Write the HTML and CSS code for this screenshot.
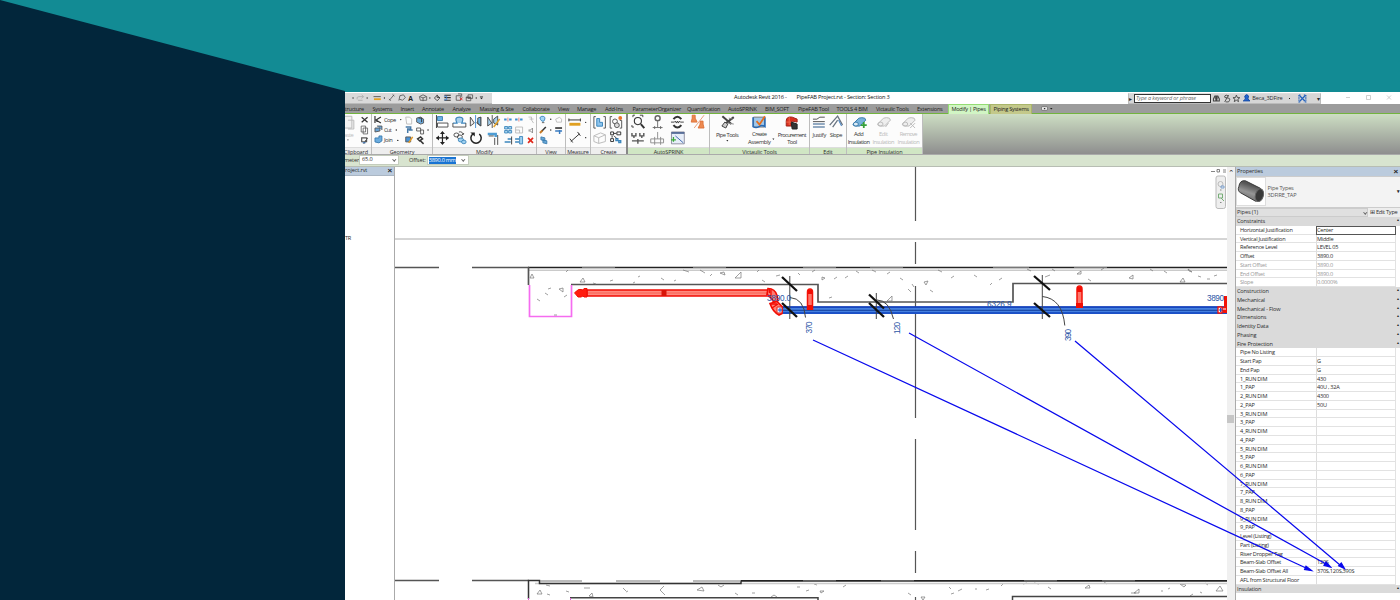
FILE: index.html
```html
<!DOCTYPE html>
<html lang="en">
<head>
<meta charset="utf-8">
<title>PipeFAB Project.rvt - Section: Section 3</title>
<link rel="stylesheet" href="styles.css">
</head>
<body>
<main class="banner">
<svg class="wedge" viewBox="0 0 345 600"><path d="M0 0L345 91V600H0Z" fill="#02263b"/></svg>
<section class="app">
  <header class="titlebar">
    <svg class="quick" viewBox="345 93 147 11" fill="none" stroke="#555" stroke-width=".9">
      <g stroke="#aaa"><path d="M351 100q-1-3 2-3h5M356 95l2 2-2 2M352 101h5"/></g>
      <path d="M369 97h8" stroke="#444"/><path d="M369.500 99.800h7.500" stroke="#e3a224" stroke-width="2"/>
      <path d="M386.500 101l5-6M386 99.500l2 2M390 94.500l2 2"/><path d="M397 101l1-5 4-1 2 3-3 3-3-1z"/>
      <path d="M419.500 97l4-2 4 2v4h-7zM420 97l3.500 1.500 3.500-1.500M423.500 98v4"/><path d="M436 98.500l3-3 3 3-3 3zM439 95v3h3" stroke="#333"/>
      <path d="M447 95.500h7M447 98h7M447 101h7" stroke-width="1.300" stroke="#333"/><path d="M446.500 96.500h3v4h-3" stroke="#3c7ed0"/>
      <path d="M460 96h5v5h-5zM462 94h4v3"/><path d="M464 98l3 3M467 98l-3 3" stroke="#d22"/>
      <path d="M473 95h5v4h-5zM471 97.500h5v4h-5z"/><path d="M471 98h5" stroke-width="1.500"/>
      <g fill="#222" stroke="none"><circle cx="346.500" cy="98.500" r=".7"/><circle cx="362" cy="98.500" r=".7"/><circle cx="381" cy="98.500" r=".7"/><circle cx="431" cy="98.500" r=".7"/><circle cx="482" cy="98.500" r=".7"/><path d="M486 98h3.500l-1.700 2zM486 96.500h3.500v.7h-3.500z"/></g>
      <text x="407.300" y="101.300" class="glyph-a">A</text>
    </svg>
    <div class="doc-title"><span>Autodesk Revit 2016 -</span><span>PipeFAB Project.rvt - Section: Section 3</span></div>
    <div class="info">
      <span class="play">▸</span><span class="search">Type a keyword or phrase</span>
      <svg viewBox="1213 93 40 11" fill="none" stroke="#444" stroke-width=".9"><path d="M1215.500 101v-2l1.500-3h1v5zM1221.500 101v-2l-1.500-3h-1v5zM1217 98h3" stroke-width="1.100"/><path d="M1231 96q-3-2-4 0t3 2 1 4h-3M1227 102l4-7"/><path d="M1239 95l1 2.500 2.500.2-2 1.500.7 2.500-2.200-1.400-2.200 1.400.7-2.500-2-1.500 2.500-.2z"/><path d="M1247.500 96q2-3 4 0l-.7 3 2.200 2h-7l2.200-2z" fill="#2265cf" stroke="#174aa2"/></svg>
      <span class="user">Beca_3DFire</span><i class="dot"></i>
      <svg class="exchange" viewBox="0 0 9 9" fill="none" stroke="#2362bd" stroke-width="1.300"><path d="M2 2l5 5M7 2l-5 5"/><path d="M1 1h2M1 1v7h2M8 1v7H6M6 1h2" stroke-dasharray="1.500 .7"/></svg>
      <span class="help">▾</span>
    </div>
    <svg class="winbtns" viewBox="0 0 60 11" fill="none" stroke="#bbb" stroke-width=".7"><path d="M6 4.500h4M26.500 2.500h4v4h-4zM47 2.500l4 4M51 2.500l-4 4"/></svg>
  </header>
  <nav class="tabs"><span>Structure</span><span>Systems</span><span>Insert</span><span>Annotate</span><span>Analyze</span><span>Massing &amp; Site</span><span>Collaborate</span><span>View</span><span>Manage</span><span>Add-Ins</span><span>ParameterOrganizer</span><span>Quantification</span><span>AutoSPRINK</span><span>BIM_SOFT</span><span>PipeFAB Tool</span><span>TOOLS 4 BIM</span><span>Victaulic Tools</span><span>Extensions</span><span class="active">Modify | Pipes</span><span class="context">Piping Systems</span><svg viewBox="0 0 12 6"><rect x=".5" y=".7" width="6" height="3.600" rx="1" fill="#eee" stroke="#555" stroke-width=".6"/><path d="M2.600 2h2l-1 1.500zM9 2h2.500l-1.200 1.600z" fill="#222"/></svg></nav>
  <div class="ribbon">
    <div class="panel clip"><svg viewBox="345 114 26.500 33" fill="none" stroke="#555"><g stroke="#bbb"><path d="M345 116h7v12h-7M348 120h6v9h-6" fill="#f2f2f2"/></g><path d="M362 117l6 5M368 117l-6 5" stroke-width="1.300" stroke="#333"/><path d="M361.500 126h4.500v6h-4.500zM363.500 128h4.500v6h-4.500z" fill="#fff" stroke-width=".8"/><path d="M362 138h5v4h-5zM364 144l4-6" stroke-width="1.200"/><path d="M363 143h3" stroke="#3979c2"/><text class="dim" x="344" y="137" textLength="10">aste</text><circle cx="348" cy="140" r=".6" fill="#333" stroke="none"/></svg><footer>Clipboard</footer></div>
    <div class="panel geo"><svg viewBox="372 114 60.500 33" fill="none" stroke="#555" stroke-width=".9">
      <path d="M375 116v7M381 117l-5 3 5 3M377 119v3" stroke="#333" stroke-width="1.200"/><path d="M375 132v-4h5v3zM377 126h5v4" fill="#6aa4d6"/><path d="M375 142v-4h4v-2h3v5l-3 2z" fill="#6aacdf" stroke="#397bae"/>
      <path d="M406 117h4l2 2v5h-5z" stroke="#bbb"/><path d="M417 118l4-1 3 2v4l-3 1-4-2z" fill="#6ca9db"/><path d="M419 118h3v4" stroke="#333"/>
      <path d="M406 127h5v2h-3v4M409 130h4" stroke="#4779a7" stroke-width="1.500"/><path d="M417 128h4v3h-4zM421 130h3v4h-3z"/>
      <path d="M406 137h5v5h-5z" fill="#4892d6"/><path d="M409 143l4-6" stroke="#e39a28" stroke-width="1.500"/><path d="M418 139l3-2 2 2-3 2zM420 140l4 4" stroke="#333" stroke-width="1.500"/>
      <g fill="#222" stroke="none"><circle cx="401" cy="119.500" r=".7"/><circle cx="396.500" cy="130" r=".7"/><circle cx="398" cy="140.500" r=".7"/><circle cx="428.500" cy="130" r=".7"/></g>
      <text x="384" y="121.700" textLength="12.500">Cope</text><text x="384" y="132.200" textLength="8">Cut</text><text x="384" y="142.500" textLength="9">Join</text></svg><footer>Geometry</footer></div>
    <div class="panel modify"><svg viewBox="433 114 103.500 33" fill="none" stroke="#444" stroke-width=".9">
      <path d="M436.500 115v13" stroke="#333"/><path d="M437.500 116.500h5v4h-5z" fill="#6db4e6" stroke="#397bae"/><path d="M437.500 123h10.500v4h-10.500z" fill="#fff"/>
      <path d="M453 123h4q-3-6 2.500-6t2.500 6h4" fill="#a9d0ec" stroke="#3f87bd" stroke-width="1.300"/><path d="M453 123v4h13v-4"/>
      <path d="M470.500 117v9l4-3zM481 117v9l-4-3z" fill="#eee"/><path d="M475.800 115v13" stroke="#3b8ad1"/><path d="M478 118l3-1v9l-3-3z" fill="#71b4e3"/>
      <path d="M488 117v9l4-3zM494 119l4-3v9l-4-2z" fill="#a4d0ef"/><path d="M494 127l6-8" stroke="#e3a32c" stroke-width="1.500"/><path d="M492.500 115v13"/>
      <g stroke="#3d8ed0" stroke-width="2"><path d="M504.500 119.500h2.500M509.500 119.500h2.500M515.500 119.500h2.500M520.500 119.500h2.500"/></g><path d="M508.300 117.500v4M519.300 117.500v4" stroke="#d55" stroke-width=".7"/>
      <path d="M529 117h3v3l2 3M530 119h4" stroke="#bbb"/>
      <g stroke="#3d86bc" fill="#a6d4f0"><path d="M505 126.500h3v2.500h-3zM509 126.500h3v2.500h-3zM505 130.500h3v2.500h-3zM509 130.500h3v2.500h-3z"/></g><path d="M516 127h7v6h-7zM516 130h4v3" stroke="#bbb"/><path d="M529 130h2l2-2v5l-2-2h-2" stroke="#888"/>
      <path d="M505 142h6M508 139h4" stroke="#3c86bd" stroke-width="1.500"/><path d="M512 136.500v8" stroke="#333"/><path d="M515.500 139h4M515.500 142h4" stroke="#3c86bd" stroke-width="1.500"/><path d="M520 136.500v7.500h3v-7.500z" stroke="#3c86bd" fill="#9fd0ef"/>
      <path d="M528.500 138l5 5M533.500 138l-5 5" stroke="#e0291c" stroke-width="1.700"/>
      <path d="M436.500 138h12M442.500 132v12" stroke="#222" stroke-width="1.200"/><path d="M440 134l2.500-3 2.500 3zM440 142l2.500 3 2.500-3zM439 135.500l-3 2.500 3 2.500zM446 135.500l3 2.500-3 2.500z" fill="#222" stroke="none"/>
      <ellipse cx="456.500" cy="135" rx="2.500" ry="2"/><ellipse cx="460" cy="137" rx="2.500" ry="2"/><path d="M459 132q4-1 4 3l-1-1M463 135l1-2"/><ellipse cx="461" cy="140" rx="2.700" ry="2" fill="#9fd0ef" stroke="#3c86bd"/><ellipse cx="464" cy="142" rx="2.300" ry="1.800" fill="#9fd0ef" stroke="#3c86bd"/>
      <path d="M473 134a5.200 5.200 0 1 0 6.500 0" stroke="#222" stroke-width="1.500"/><path d="M470.500 132.500h4.500v4z" fill="#222" stroke="none"/>
      <path d="M488 134h8v3" stroke="#4e9dd4" stroke-width="2.500"/><path d="M495 138v7M498 135v10M489 136h5"/>
      </svg><footer>Modify</footer></div>
    <div class="panel view"><svg viewBox="537 114 28.500 33" fill="none" stroke="#555" stroke-width=".9"><path d="M542 121q-4-4 0-5 5 0 2 5z" fill="#a4d6f5" stroke="#3c86bd"/><path d="M542 122.500h2.500"/><path d="M556 119l4-2 2 2v3h-5z" stroke="#bbb"/><path d="M546 127l-4 4" stroke="#333" stroke-width="1.500"/><path d="M542.500 130.500l-2.500 2.500" stroke="#c77a25" stroke-width="2"/><path d="M555.500 128h7" stroke-width="2"/><path d="M555.500 131h7M560 130v4" stroke="#397bc0" stroke-width="1.500"/><path d="M541 137l4 1v3l-4-1zM543 140l4 1v3l-4-1z" fill="#68a7d7" stroke="#397bae"/><g fill="#222" stroke="none"><circle cx="551" cy="119" r=".7"/><circle cx="551" cy="130" r=".7"/></g></svg><footer>View</footer></div>
    <div class="panel measure"><svg viewBox="566 114 25 33" fill="none" stroke="#333"><path d="M569 119.500h12M569 118v3M581 118v3"/><path d="M569.500 124h11.500" stroke="#e0a021" stroke-width="3"/><path d="M571 142l9-8M570 139l3 4M578 132l3 4"/><g fill="#222" stroke="none"><circle cx="586.500" cy="122" r=".7"/><circle cx="586.500" cy="138" r=".7"/></g></svg><footer>Measure</footer></div>
    <div class="panel create"><svg viewBox="591 114 36.500 33" fill="none" stroke="#555"><path d="M596 116h-2v12h2M604 116h2v12h-2M613 116h-2v12h2M621 120h2v8h-2"/><path d="M597 118h3v4h3v4h-6z" fill="#8dc4ed" stroke="#3c86bd"/><circle cx="616" cy="121" r="2.500"/><circle cx="618" cy="125" r="2.500" fill="#ddd"/><circle cx="621.500" cy="117.500" r="2" fill="#e9742a" stroke="none"/><path d="M594 136l7-3 5 2v7l-7 2-5-2zM594 136l5 2 7-3M599 138v6" stroke="#bbb"/><path d="M611.500 132h3v3h-3zM618 132h4v3h-4zM611.500 139h3v3h-3z" stroke="#333"/><path d="M617 139h2v2h-2zM620 141h2v2h-2z" stroke="#3c86bd" stroke-width="1.400"/><path d="M615 133.500h2.500M613 136v2M615 136l3 3" stroke="#333"/></svg><footer>Create</footer></div>
    <div class="panel green auto"><svg viewBox="628 114 82 33" fill="none" stroke="#333" stroke-width=".9">
      <path d="M633 117v-2h2M640 115h3v2M632 125v2h2" /><circle cx="638" cy="121" r="3.600" stroke-width="1.100"/><path d="M641 124l3.500 4" stroke-width="2"/>
      <circle cx="658" cy="118" r="2.500" stroke="#666" stroke-width="1.500"/><path d="M658 120v7M653 127.500h10M655 126v3M661 126v3" stroke="#666"/>
      <path d="M674 119q4-5 8 0M674 125q4 5 8 0" stroke="#333" stroke-width="2"/><path d="M671.500 122h3.500l1-1 1 2 1-2 1 2 1-2 1 1h3.500"/>
      <path d="M693 115h3v3l2 4h-6l1-4zM701 121h3v3l1 4h-6l2-4z" fill="#ed8a50" stroke="#dd7037"/><path d="M705 115l-10 13" stroke="#e59671"/>
      <path d="M632 133v3h4v-3M640 133v3h4v-3M634 136v2M642 136v2M632 141h12M638 139v5" stroke-width="1.400" stroke="#555"/>
      <path d="M651 139h13v4h-13zM655 137v8M658 132v7M661 137v8" stroke="#888"/>
      <path d="M672 132h13v12h-13z" fill="#e7eef9" stroke="#889"/><path d="M672 133h13" stroke="#4f6794" stroke-width="1.800"/><path d="M676 136l8 7" stroke="#345fa8"/><path d="M674 137v5M671.500 140h5" stroke="#3ba938" stroke-width="1.300"/></svg><footer>AutoSPRINK</footer></div>
    <div class="panel green vict"><svg viewBox="710 114 100 33" fill="none" stroke="#444">
      <path d="M722.500 116l9 8M734 117l-9 7" stroke-width="2"/><path d="M722 126l3-4 3 2-2 4z" fill="#ccc"/><path d="M728 123l6 1M729 118l4 1" stroke="#888"/>
      <path d="M754 117h11v10h-11z" fill="#9fc8ec" stroke="#777"/><path d="M753.500 117v9.500q3 2 6 0 3-2 6 0V117" stroke="#296bb5" stroke-width="1.600"/><path d="M757 121l3 3.500 5.500-8.500" stroke="#e56f20" stroke-width="1.800"/>
      <path d="M787 126v-5q0-5 6-4l5 2v3l-5-1v5z" fill="#d9301f" stroke="#a22318"/><path d="M792 122l6 2v5h-5z" fill="#333" stroke="#222"/><path d="M790 117v8M787 122h5" stroke="#ef684c"/>
      <g text-anchor="middle"><text x="727.500" y="137" textLength="23">Pipe Tools</text><text x="760" y="136.500" textLength="15">Create</text><text x="760" y="143.800" textLength="23">Assembly</text><text x="793" y="137" textLength="29">Procurement</text><text x="793" y="143.800" textLength="10">Tool</text></g><path d="M726.500 140h2l-1 1.500zM773 138.500h2l-1 1.500z" fill="#222" stroke="none"/></svg><footer>Victaulic Tools</footer></div>
    <div class="panel green edit"><svg viewBox="810 114 36.500 33" fill="none" stroke="#555"><path d="M813 119h4l3-2h5M813 121.500h12"/><path d="M813 124h12M813 127h12" stroke="#708eae" stroke-width="1.500"/><path d="M830 125l8-9 5 9M833 127l5-7" stroke="#697481" stroke-width="1.300"/><path d="M839 120l3 6" stroke="#397bc0"/><g text-anchor="middle"><text x="819.500" y="137" textLength="14">Justify</text><text x="836.500" y="137" textLength="13">Slope</text></g></svg><footer>Edit</footer></div>
    <div class="panel green insul"><svg viewBox="847 114 76 33" fill="none" stroke="#397bac"><path d="M853 124l6-6q3-1 6 0l1 2-6 6h-4q-3 0-3-2z" fill="#78b2dc"/><ellipse cx="856" cy="124" rx="2.500" ry="2" fill="#ddecf7"/><path d="M864 122v6M861 125h6" stroke="#36a13a" stroke-width="1.800"/><g stroke="#bbb"><path d="M878 124l6-6q3-1 6 0l1 2-6 6h-4q-3 0-3-2zM903 124l6-6q3-1 6 0l1 2-6 6h-4q-3 0-3-2z" fill="#eee"/><ellipse cx="881" cy="124" rx="2.500" ry="2"/><ellipse cx="906" cy="124" rx="2.500" ry="2"/><path d="M886 127l3-4M911 123l5 5M916 123l-5 5"/></g><g text-anchor="middle"><text x="859" y="136.500" textLength="10">Add</text><text x="859" y="143.800" textLength="22.500">Insulation</text><g class="dim"><text x="884" y="136.500" textLength="9">Edit</text><text x="884" y="143.800" textLength="22.500">Insulation</text><text x="909.500" y="136.500" textLength="18">Remove</text><text x="909.500" y="143.800" textLength="22.500">Insulation</text></g></g></svg><footer>Pipe Insulation</footer></div>
  </div>
  <div class="options"><label class="diameter">meter:</label><span class="combo d">65.0<b></b></span><i class="sep"></i><label>Offset:</label><span class="combo o"><mark>3890.0 mm</mark><b></b></span></div>
  <div class="workspace">
    <aside class="browser"><h2><span>roject.rvt</span><b>×</b></h2><div class="tree"><span></span><span></span><span>TR</span><span></span></div></aside>
    <svg class="drawing" viewBox="395 167 832 433" fill="none" stroke="#444">
      <path d="M395 239h832" stroke="#aaa"/>
      <path d="M395 267.500h44M472 267.500h57M395 580.500h44M472 580.500h57" stroke="#555" stroke-width="1.300"/>
      <path d="M915.500 167v54M915.500 242v22M915.500 286v132M915.500 439v91M915.500 551v22M915.500 597v3" stroke="#555" stroke-width="1.200"/>
      <path d="M529 270.200h698" stroke="#aaa" stroke-width=".9"/><path d="M528 267.500h699" stroke="#222" stroke-width="1.600"/><path d="M582 267.500h33M693 267.500h33M803 267.500h33M870 267.500h33M993 267.500h36M1074 267.500h33" stroke="#777"/>
      <path d="M528.500 267v18M571 284.500h247v17.500h195v-18.500h214" stroke="#555" stroke-width="1.700"/>
      <path d="M529.500 285v31.500h42V285" stroke="#f56cf0" stroke-width="1.700"/>
      <g stroke="#777" stroke-width=".7">
        <path d="M530 278l2-4 2 4zM580 282l3-4 2 4zM559 289l4-1v4zM720 273l4-1 1 3zM735 278l6-6v6zM822 277l3 1-3 2zM887 301l5-5v5zM924 282l4-1-2 4zM1077 274l4-3v3zM1129 278l4-3v4zM1180 282l3-4 2 4zM1188 269l4 3-3-1z"/>
        <path d="M548 289l3-1M545 293l3 2M537 299l3 2M564 297l3-2M554 315h3M566 272l2-2M593 283l3 1M610 281l3-1M638 277l2-1M633 283l2-1M661 278l3 2M674 281l2-1M683 270l6 2M700 270l5 3M710 276l2-2M762 280l3 2M757 272l2-2M776 276l4-1M798 273l2 2M812 272l3-2M834 279l3-2M845 278l3-2M856 271l3 2M872 270l4 2M887 274l3-2M900 278l3 2M908 289l3 3M912 284l2 3M930 290l3 2M938 270l4 2M951 278l3-2M974 275l3 2M990 285l2-2M999 280l3-2M829 298l3-1M1027 269l4 2M1045 277l5-2M1052 269l3 2M1088 279l3 2M1101 270l3-2M1150 269l3 2M1164 271l3 2M1198 276l3 1M1207 279h3M1214 276l3-1"/>
        <path d="M546 585l4 1M547 594l3 1M537 594l3-4 2 4zM566 591l3 1M584 588l6 0M589 596l3-3 1 4zM623 588l3 3M626 592l2-1M664 586l-4 4 5 5M697 590l5-3 2 4zM718 585l3 2 3-2M735 593l3 2M752 593h3M771 597l3-2 3 2M797 587h3M806 591l3-1M820 591h4l-3 2zM814 584l3 1M843 587l3-2M908 593l3 2M921 597h4l-2 3zM949 587l2 2M951 594l3-1M958 591l4-2M975 589h2M986 590l3-1M1001 586l2-2M1023 584l4-1M1034 583l5 1M1048 587l3 2M1085 588l4-3 1 3zM1104 582l3 2M1131 593l5 0M1134 593l5-4v4zM1161 591h2M1168 589l2-1M1180 584l6 1-2 2zM1190 596l3-2M1200 592l2 1M1205 583l3 2M1216 591l4-5 3 5z"/>
      </g>
      <path d="M535 583.500h692" stroke="#ccc" stroke-width="1.700"/><path d="M528.500 599v-18.500h11v3H741v-3" stroke="#333" stroke-width="1.500"/><path d="M540 581h42M616 581h44M693 581h48" stroke="#777"/><path d="M741 580.800h486" stroke="#222" stroke-width="1.700"/><path d="M803 580.800h33M881 580.800h33M1024 580.800h33M1102 580.800h33" stroke="#777" stroke-width="1.300"/>
      <path d="M570 597.700h248v2.300M1012.500 600v-3.500H1227" stroke="#444" stroke-width="1.500"/><path d="M528.500 598v2M570.500 598v2" stroke="#e363dd"/>
      <path d="M587 290h183v6H587z" fill="#ff8a7e" stroke="#f20d04" stroke-width="1.500"/><path d="M588 293h181" stroke="#f8564a" stroke-width=".8"/><path d="M574.500 292.800l4-3.300h2.500l2 .5 1-1.500h3v8.500h-3l-1-1-2 1h-3z" fill="#ff1d10" stroke="#f20d04"/><path d="M661.500 290h5v6h-5z" fill="#d91408" stroke="none"/>
      <path d="M780 306.500h447v7.500H780z" fill="#4580de" stroke="none"/><path d="M780 307h447" stroke="#0833b5" stroke-width="1.500"/><path d="M780 310.300h447" stroke="#123f9e"/><path d="M780 313h447" stroke="#1c51c7" stroke-width="2"/>
      <path d="M768 288.500q7 0 9 7l1 5-4 2-4-6-3-2z" fill="#ff7b70" stroke="#f20d04" stroke-width="1.700"/><path d="M770 303.500l7-2 5 5v7l-3 1.500q-6-3-9-11.500z" fill="#ff8176" stroke="#f20d04" stroke-width="1.700"/><path d="M771 290v6M770 304h7M772 308l6-4M769.500 288v5" stroke="#f20d04" stroke-width="1.300"/><path d="M777 307h5v6h-5z" fill="#e8f0ff" stroke="#e92218"/><path d="M778 310h4M780 308v4" stroke="#1753cf"/>
      <path d="M807.500 309v-17q0-3 2.500-3t2.500 3v17z" fill="#ff766b" stroke="#f41308" stroke-width="1.500"/><path d="M808 290h4v4h-4zM807 305h6v5h-6z" fill="#f20d04" stroke="none"/>
      <path d="M1077 307v-18q0-3 2.500-3t2.500 3v18z" fill="#ff766b" stroke="#f41308" stroke-width="1.500"/><path d="M1077 287h5v5h-5zM1076 303h7v5h-7z" fill="#f20d04" stroke="none"/>
      <path d="M1218 307h4v6h-4z" fill="#fff" stroke="#f41308" stroke-width="1.300"/><path d="M1219 310h3M1220.500 308v4" stroke="#1753cf"/><path d="M1224 296h3v17h-4v-6h1z" fill="#f41308" stroke="none"/><path d="M1223 309h3" stroke="#fff"/>
      <g stroke="#444"><path d="M789.800 276v43M876.300 293v26M1042.300 275v44"/><path d="M790 297.500q14 1 15.500 20M877 300q12 0 16.500 19M1042.300 296.500q20 2 22.500 29"/></g>
      <path d="M782 277l15 14M782 303l15 14M869 294.500l15 14M869 303l15 14M1034 276l16 14M1034 303l16 14" stroke="#111" stroke-width="2.300"/>
      <g class="dims"><text x="767" y="301" textLength="24">3890.0</text><text x="987" y="306.500" textLength="24.500">6326.9</text><text x="1207" y="301" textLength="17">3890</text><text transform="translate(812 333.500) rotate(-90)" textLength="12">370</text><text transform="translate(899.500 334) rotate(-90)" textLength="12">120</text><text transform="translate(1071 341) rotate(-90)" textLength="12">390</text></g>
      <path d="M1211 171.500h4M1217 169.500h2.500v2.500h-2.500zM1223 170h3M1223 172h3" stroke="#666" stroke-width=".8"/>
      <rect x="1216" y="176" width="9.500" height="32.500" rx="2" fill="#eee" stroke="#bbb"/><circle cx="1220.500" cy="184" r="2.500" stroke="#bbb"/><path d="M1221 186h3v2h-3z" stroke="#7da1cf"/><path d="M1218.500 194h4v4h-4zM1221 198l3 3" stroke="#77ad77"/><path d="M1220 190h1.500M1220 202.500h1.500" stroke="#888"/>
    </svg>
    <div class="scrollbar"><span>⌃</span><i></i></div>
    <aside class="properties">
      <h2><span>Properties</span><b>×</b></h2>
      <div class="type"><svg viewBox="0 0 30 29"><defs><linearGradient id="pipe" x1="0" y1="0" x2="-.4" y2="1"><stop stop-color="#555"/><stop offset=".35" stop-color="#969696"/><stop offset="1" stop-color="#454545"/></linearGradient></defs><path d="M2 9Q3 2 9 3l16 8q6 6 0 13l-5 1L4 16Q0 14 2 9z" fill="url(#pipe)" stroke="#333"/><ellipse cx="24" cy="18.500" rx="4.300" ry="7" transform="rotate(15 24 18.500)" fill="#393939" stroke="#666"/></svg><p>Pipe Types<br>3DFIRE_TAP</p><b>▾</b></div>
      <div class="filter"><span>Pipes (1)<i class="chev"></i></span><em>⊞ Edit Type</em></div>
      <div class="group">Constraints</div>
      <dl><dt>Horizontal Justification</dt><dd class="boxed">Center</dd><dt>Vertical Justification</dt><dd>Middle</dd><dt>Reference Level</dt><dd>LEVEL 05</dd><dt>Offset</dt><dd>3890.0</dd><dt class="off">Start Offset</dt><dd class="off">3890.0</dd><dt class="off">End Offset</dt><dd class="off">3890.0</dd><dt class="off">Slope</dt><dd class="off">0.0000%</dd></dl>
      <div class="group">Construction</div><div class="group">Mechanical</div><div class="group">Mechanical - Flow</div><div class="group">Dimensions</div><div class="group">Identity Data</div><div class="group">Phasing</div><div class="group">Fire Protection</div>
      <dl><dt>Pipe No Listing</dt><dd></dd><dt>Start Pap</dt><dd>G</dd><dt>End Pap</dt><dd>G</dd><dt>1_RUN DIM</dt><dd>430</dd><dt>1_PAP</dt><dd>40U , 32A</dd><dt>2_RUN DIM</dt><dd>4300</dd><dt>2_PAP</dt><dd>50U</dd><dt>3_RUN DIM</dt><dd></dd><dt>3_PAP</dt><dd></dd><dt>4_RUN DIM</dt><dd></dd><dt>4_PAP</dt><dd></dd><dt>5_RUN DIM</dt><dd></dd><dt>5_PAP</dt><dd></dd><dt>6_RUN DIM</dt><dd></dd><dt>6_PAP</dt><dd></dd><dt>7_RUN DIM</dt><dd></dd><dt>7_PAP</dt><dd></dd><dt>8_RUN DIM</dt><dd></dd><dt>8_PAP</dt><dd></dd><dt>9_RUN DIM</dt><dd></dd><dt>9_PAP</dt><dd></dd><dt>Level (Listing)</dt><dd></dd><dt>Part (Listing)</dt><dd></dd><dt>Riser Dropper Tag</dt><dd></dd><dt>Beam-Slab Offset</dt><dd>120S</dd><dt>Beam-Slab Offset All</dt><dd>370S,120S,390S</dd><dt>AFL from Structural Floor</dt><dd></dd></dl>
      <div class="group">Insulation</div>
    </aside>
  </div>
</section>
<svg class="callouts" viewBox="0 0 1400 600" stroke="#0909ed" stroke-width="1.250"><path d="M813 340L1306 568M909 333L1326 564M1075 341L1340 565" fill="none"/><path d="M1311.500 570.500l-5.500-4.300-1.400 3.200zM1330.500 567l-4.500-5-2 3.300zM1344.500 568.500l-3.200-5.500-2.600 2.800z" fill="#0909ed"/></svg>
</main>
</body>
</html>
```
FILE: styles.css
```css
* { box-sizing: border-box; }
body { margin: 0; font: 5.6px/1 "Open Sans", "Noto Sans", sans-serif; letter-spacing: -.26px; color: #2c2c2c; }
svg { display: block; }
svg text { font: 5.8px "Open Sans", sans-serif; letter-spacing: 0; fill: #333; stroke: none; }
.banner { position: relative; width: 1400px; height: 600px; overflow: hidden; background: #128b94; padding: 92px 0 0 345px; }
.wedge { position: absolute; left: 0; top: 0; width: 345px; height: 600px; }
.callouts { position: absolute; left: 0; top: 0; width: 1400px; height: 600px; pointer-events: none; }
.app { width: 1055px; height: 508px; background: #fff; overflow: hidden; }
h2 { margin: 0; font: inherit; }

.titlebar { height: 12px; padding-top: 1px; display: flex; position: relative; }
.quick { width: 147px; height: 11px; background: #dadada; border-bottom: 1px solid #bbb; flex: none; }
svg .glyph-a { font-size: 7.5px; font-weight: bold; fill: #222; }
.doc-title { width: 636px; padding-left: 242px; padding-top: 2px; display: flex; gap: 10px; white-space: nowrap; font-size: 5.700px; letter-spacing: -.22px; color: #111; flex: none; }
.info { display: flex; align-items: center; width: 193px; height: 11px; background: #d6d6d6; border: 1px solid #bbb; border-top-color: #ddd; flex: none; }
.play { width: 5px; font-size: 6px; }
.search { width: 79px; height: 9px; border: 1px solid #333; background: #fff; padding: 1px; font-size: 5.500px; letter-spacing: -.1px; font-style: italic; color: #666; white-space: nowrap; }
.info svg { width: 40px; height: 11px; }
.info .user { width: 35px; padding-left: 2px; letter-spacing: -.15px; }
.info .exchange { width: 9px; height: 9px; margin-left: 8px; }
.dot { width: 2px; height: 1px; background: #222; margin-left: 4px; }
.help { margin-left: 10px; font-size: 6px; }
.winbtns { width: 60px; height: 11px; margin-left: 19px; }

.tabs { display: grid; height: 9.500px; grid-template-columns: 27.500px 28px 21.500px 30.500px 27px 43px 35.500px 19px 28px 27.500px 54.500px 41px 37px 33px 38.500px 39.500px 41px 29.500px 42px 43px 12px; background: #9c9c9c; border-bottom: 1.500px solid #72b43e; white-space: nowrap; line-height: 10px; color: #222; font-size: 5.600px; letter-spacing: -.27px; }
.tabs span:first-child { margin-left: -3px; }
.tabs .active { background: #d1f5c4; border: 1px solid #94dc74; border-bottom: 0; padding-left: 3px; margin: 0 0 0 1px; line-height: 8.500px; }
.tabs .context { background: #c3c88a; border: 1px solid #a9b66a; border-bottom: 0; padding-left: 3px; margin: 0 0 0 1px; line-height: 8.500px; }
.tabs svg { width: 12px; height: 6px; margin: 2px 0 0 9px; }

.ribbon { display: flex; height: 41px; background: linear-gradient(#cddec3, #8e8e8e); border-bottom: 1px solid #aaa; }
.panel { height: 40px; flex: none; background: #fcfcfc; border-right: 1px solid #bdbdbd; display: grid; grid-template-rows: 33px 7px; }
.panel > svg { width: 100%; height: 33px; overflow: hidden; }
.panel footer { background: #eee; text-align: center; line-height: 8px; font-size: 5.500px; letter-spacing: -.12px; border-top: .5px solid #ddd; white-space: nowrap; }
.panel.green footer { background: #d0e6c4; }
.clip { width: 27px; }
.clip footer { text-indent: -4px; }
.geo { width: 61px; }
.modify { width: 104px; }
.view { width: 29px; }
.measure { width: 25px; }
.create { width: 37px; border-right: 2px solid #888; }
.auto { width: 82px; }
.vict { width: 100px; }
.edit { width: 37px; }
.insul { width: 76px; }
.panel .dim, .panel .dim text { fill: #bbb; }

.options { height: 12px; background: #d8e4cf; border-bottom: 1px solid #b7bdb3; display: flex; align-items: center; }
.options label { letter-spacing: -.1px; padding-top: 1px; }
.diameter { width: 15px; margin-left: -1px; white-space: nowrap; }
.combo { display: flex; align-items: center; justify-content: space-between; height: 10px; background: #fff; border: 1px solid #c4ccbd; padding: 0 2px; }
.combo.d { width: 40px; letter-spacing: -.1px; }
.combo.o { width: 42px; padding-left: 1px; margin-left: 1px; }
.combo mark { background: #1974d2; color: #fff; height: 7px; line-height: 7px; white-space: nowrap; width: 27px; }
.combo b, .chev { width: 2.500px; height: 2.500px; border: solid #666; border-width: 0 .8px .8px 0; transform: rotate(45deg); margin: -1px 1px 0 0; }
.sep { width: 10px; }

.workspace { display: flex; height: 433px; }
.browser { width: 50px; border-right: 1.500px solid #aaa; flex: none; }
.browser h2, .properties h2 { height: 9px; background: #bbcbdd; display: flex; justify-content: space-between; align-items: center; white-space: nowrap; letter-spacing: -.12px; }
.browser h2 { border-bottom: 1px solid #aab6c3; }
.browser h2 b, .properties h2 b { font: bold 8px/7px "Liberation Sans", sans-serif; color: #222; margin-right: 2px; }
.tree { display: grid; grid-template-rows: 38px 20px 20px 38px; padding-top: 2px; }
.drawing { width: 832px; height: 433px; flex: none; }
.dims text { font: 8.200px "Liberation Sans", sans-serif; fill: #2b55a6; }
.scrollbar { width: 8px; background: #f0f0f0; text-align: center; flex: none; }
.scrollbar span { display: block; height: 248px; color: #222; font: bold 7px/12px "DejaVu Sans", sans-serif; }
.scrollbar i { display: block; height: 8px; width: 7px; background: #c6c6c6; }

.properties { flex: 1; background: #fff; border-left: 1px solid #aaa; min-width: 0; }
.properties h2 { padding: 1px 0 0 1px; }
.type { height: 32.500px; display: flex; align-items: center; background: #f3f3f3; border-top: 1px solid #ccc; border-bottom: 1px solid #ccc; }
.type svg { width: 30px; height: 29px; background: #fff; border: .5px solid #ddd; }
.type p { margin: 0 0 0 1.500px; line-height: 7px; flex: 1; color: #555; letter-spacing: -.18px; }
.type b { font-size: 5px; margin-right: 0; }
.filter { height: 9px; display: flex; align-items: center; background: #ededed; }
.filter span { width: 132px; height: 9px; background: #e0e0e0; border: 1px solid #ccc; display: flex; align-items: center; justify-content: space-between; letter-spacing: -.1px; }
.filter em { font-style: normal; margin-left: 2px; white-space: nowrap; }
.group { height: 8.765px; line-height: 9.500px; padding-left: 1px; background: #dadada; letter-spacing: -.16px; position: relative; }
.group::after { content: "▴"; position: absolute; right: 1px; top: -2px; font-size: 4px; color: #222; }
dl { display: grid; grid-template-columns: 80px 1fr; grid-auto-rows: 8.765px; margin: 0; line-height: 9.500px; }
dt, dd { margin: 0; border-bottom: 1px solid #e2e2e2; white-space: nowrap; }
dt { padding-left: 4px; }
dd { padding-left: 0; border-left: 1px solid #ddd; margin-right: 4px; border-right: 1px solid #e2e2e2; }
dd.boxed { border: 1px solid #555; line-height: 7.500px; padding-left: 0; }
.off { color: #999; }
```
